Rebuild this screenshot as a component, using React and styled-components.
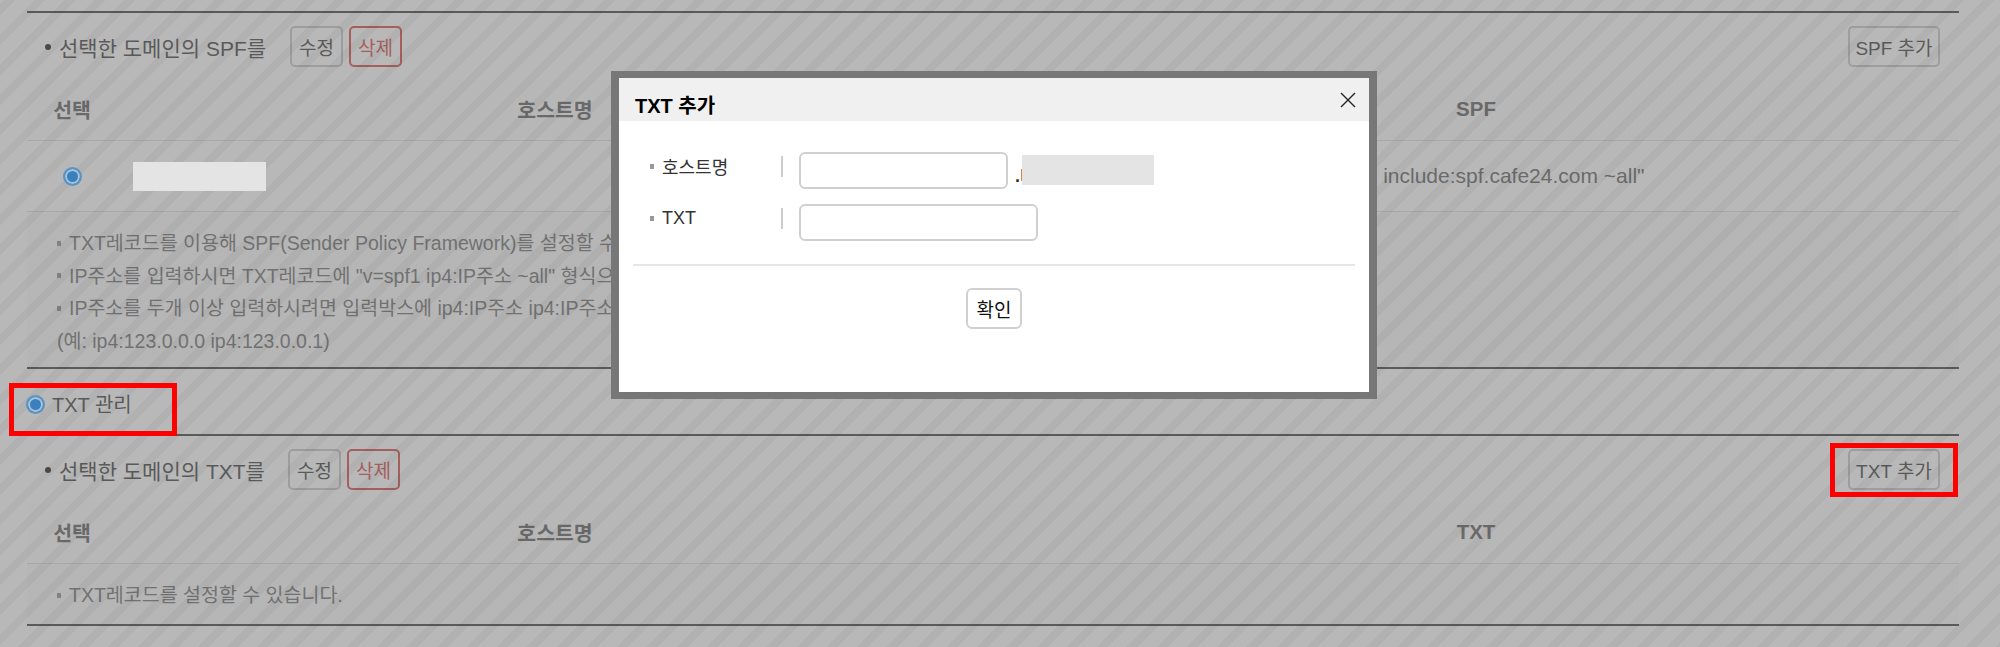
import React from "react";
import styled, { createGlobalStyle } from "styled-components";

const FONT = `"Liberation Sans", "Noto Sans CJK KR", sans-serif`;

const GlobalStyle = createGlobalStyle`
	html, body {
		margin: 0;
		padding: 0;
		background: #fff;
	}
	* {
		box-sizing: border-box;
	}
`;

const SpfSection = () => (
	<Section>
		<Toolbar>
			<ToolbarLeft>
				<ToolbarTitle $w={245}>선택한 도메인의 SPF를</ToolbarTitle>
				<Buttons>
					<Button>수정</Button>
					<Button $danger>삭제</Button>
				</Buttons>
			</ToolbarLeft>
			<AddButton>SPF 추가</AddButton>
		</Toolbar>
		<HeadRow>
			<HeadCell>선택</HeadCell>
			<HeadCell>호스트명</HeadCell>
			<HeadCell>SPF</HeadCell>
		</HeadRow>
		<BodyRow>
			<Cell>
				<Radio />
			</Cell>
			<HostCell>
				<Redacted $w={133} $h={29} />
			</HostCell>
			<Cell>"v=spf1 include:spf.cafe24.com ~all"</Cell>
		</BodyRow>
		<Notes>
			<Note>TXT레코드를 이용해 SPF(Sender Policy Framework)를 설정할 수 있습니다.</Note>
			<Note>IP주소를 입력하시면 TXT레코드에 "v=spf1 ip4:IP주소 ~all" 형식으로 설정됩니다.</Note>
			<Note>IP주소를 두개 이상 입력하시려면 입력박스에 ip4:IP주소 ip4:IP주소 형식으로 입력합니다.</Note>
			<NoteExample>(예: ip4:123.0.0.0 ip4:123.0.0.1)</NoteExample>
		</Notes>
	</Section>
);

const TxtSection = () => (
	<Section>
		<Toolbar>
			<ToolbarLeft>
				<ToolbarTitle $w={243}>선택한 도메인의 TXT를</ToolbarTitle>
				<Buttons>
					<Button>수정</Button>
					<Button $danger>삭제</Button>
				</Buttons>
			</ToolbarLeft>
			<Marked>
				<AddButton>TXT 추가</AddButton>
				<RedFrame $inset="-6px -18px -7px -18px" />
			</Marked>
		</Toolbar>
		<HeadRow>
			<HeadCell>선택</HeadCell>
			<HeadCell>호스트명</HeadCell>
			<HeadCell>TXT</HeadCell>
		</HeadRow>
		<Notes $single>
			<Note>TXT레코드를 설정할 수 있습니다.</Note>
		</Notes>
	</Section>
);

const AddTxtModal = () => (
	<Modal>
		<ModalHeader>
			<ModalTitle>TXT 추가</ModalTitle>
			<CloseButton aria-label="닫기">
				<svg width="16" height="16" viewBox="0 0 16 16" fill="none" stroke="#222" strokeWidth="1.4">
					<path d="M1 1 L15 15 M15 1 L1 15" />
				</svg>
			</CloseButton>
		</ModalHeader>
		<Form>
			<FormRow>
				<FormLabel>호스트명</FormLabel>
				<Input $w={209} />
				<DomainDot>.</DomainDot>
				<OrangeBar />
				<Redacted $w={132} $h={30} />
			</FormRow>
			<FormRow>
				<FormLabel>TXT</FormLabel>
				<Input $w={239} />
			</FormRow>
		</Form>
		<Divider />
		<ModalFooter>
			<ConfirmButton>확인</ConfirmButton>
		</ModalFooter>
	</Modal>
);

const App = () => {
	return (
		<Page>
			<GlobalStyle />
			<SpfSection />
			<RadioTitle>
				<Radio />
				<RadioLabel>TXT 관리</RadioLabel>
				<RedFrame $inset="14px 0 -2px -18px" />
			</RadioTitle>
			<TxtSection />
			<Backdrop />
			<AddTxtModal />
		</Page>
	);
};

const Page = styled.div`
	position: relative;
	width: 2000px;
	height: 647px;
	overflow: hidden;
	padding: 11px 41px 0 27px;
	background: #fff;
	font-family: ${FONT};
	color: #333;
`;

const Backdrop = styled.div`
	position: absolute;
	inset: 0;
	z-index: 10;
	background: repeating-linear-gradient(
		135deg,
		rgba(124, 124, 124, 0.54) 0 3.2px,
		rgba(116, 116, 116, 0.56) 3.2px 11px,
		rgba(124, 124, 124, 0.54) 11px 21.2px
	);
`;

const Section = styled.section`
	border-top: 2px solid #333;
	border-bottom: 2px solid #333;
`;

const Toolbar = styled.div`
	display: flex;
	align-items: flex-start;
	justify-content: space-between;
	height: 67px;
	padding: 13px 19px 0 18px;
`;

const ToolbarLeft = styled.div`
	display: flex;
	align-items: center;
`;

const ToolbarTitle = styled.div`
	display: flex;
	align-items: center;
	width: ${(p) => p.$w}px;
	font-size: 21px;
	color: #333;

	&::before {
		content: "";
		flex: none;
		width: 6px;
		height: 6px;
		margin-right: 8px;
		border-radius: 50%;
		background: #111;
	}
`;

const Buttons = styled.div`
	display: flex;
	gap: 6px;
`;

const Button = styled.button`
	height: 41px;
	padding: 0 7px;
	border: 2px solid ${(p) => (p.$danger ? "#d83a3a" : "#c4c4c4")};
	border-radius: 5px;
	background: #fff;
	color: ${(p) => (p.$danger ? "#d83a3a" : "#333")};
	font-family: ${FONT};
	font-size: 19px;
`;

const AddButton = styled(Button)`
	width: 92px;
	padding: 0;
	white-space: nowrap;
`;

const Marked = styled.div`
	position: relative;
	display: flex;
`;

const RedFrame = styled.span`
	position: absolute;
	inset: ${(p) => p.$inset};
	z-index: 20;
	border: 5px solid #f00;
	pointer-events: none;
`;

const HeadRow = styled.div`
	display: grid;
	grid-template-columns: 90px 876px 1fr;
	height: 61px;
	padding-bottom: 2px;
	border-bottom: 1px solid #ddd;
	align-items: center;
	text-align: center;
	background: #fdfdfd;
`;

const HeadCell = styled.div`
	font-size: 20.5px;
	font-weight: 700;
	color: #555;
`;

const BodyRow = styled.div`
	display: grid;
	grid-template-columns: 90px 876px 1fr;
	height: 71px;
	align-items: center;
	border-bottom: 1px solid #ddd;
	font-size: 21px;
	color: #555;
`;

const Cell = styled.div`
	display: flex;
	justify-content: center;
	align-items: center;
	white-space: nowrap;
`;

const HostCell = styled.div`
	display: flex;
	align-items: center;
	padding-left: 16px;
`;

const Radio = styled.span`
	position: relative;
	z-index: 20;
	flex: none;
	display: block;
	width: 19px;
	height: 19px;
	border: 2px solid #5b94c2;
	border-radius: 50%;
	background: #3b80bc;
	box-shadow: inset 0 0 0 2px #a9c4da;
`;

const Redacted = styled.span`
	position: relative;
	z-index: 20;
	flex: none;
	display: block;
	width: ${(p) => p.$w}px;
	height: ${(p) => p.$h}px;
	background: #e4e4e4;
`;

const Notes = styled.div`
	padding: ${(p) => (p.$single ? "15px 0 12.5px 30px" : "15px 0 10px 30px")};
	background: #fafafa;
	font-size: 19.5px;
	line-height: 32.5px;
	color: #666;
`;

const Note = styled.div`
	display: flex;
	align-items: center;

	&::before {
		content: "";
		flex: none;
		width: 4px;
		height: 5px;
		margin-right: 8px;
		background: #888;
	}
`;

const NoteExample = styled.div`
	color: #666;
`;

const RadioTitle = styled.div`
	position: relative;
	display: flex;
	align-items: center;
	gap: 7px;
	width: 150px;
	height: 65px;
	padding-top: 6px;
	font-size: 20px;
	color: #333;

	& > ${Radio} {
		margin-left: -1px;
	}
`;

const RadioLabel = styled.span`
	margin-bottom: 3px;
`;

const Modal = styled.div`
	position: absolute;
	top: 71px;
	left: 611px;
	z-index: 30;
	width: 766px;
	height: 328px;
	border: solid #777;
	border-width: 7px 8px;
	background: #fff;
	color: #000;
`;

const ModalHeader = styled.div`
	position: relative;
	height: 43px;
	padding: 17px 0 0 16px;
	background: #f0f0f0;
`;

const ModalTitle = styled.h3`
	margin: 0;
	font-size: 20px;
	line-height: 22px;
	font-weight: 700;
`;

const CloseButton = styled.button`
	position: absolute;
	top: 13px;
	right: 12px;
	display: flex;
	width: 18px;
	height: 18px;
	padding: 1px;
	border: 0;
	background: none;
`;

const Form = styled.div`
	display: flex;
	flex-direction: column;
	gap: 16px;
	padding: 31px 0 0 31px;
`;

const FormRow = styled.div`
	display: flex;
	align-items: center;
	height: 36px;
`;

const FormLabel = styled.div`
	display: flex;
	align-items: center;
	width: 133px;
	height: 21px;
	margin-right: 16px;
	margin-bottom: 8px;
	border-right: 2px solid #ccc;
	font-size: 18px;
	color: #333;

	&::before {
		content: "";
		flex: none;
		width: 4px;
		height: 5px;
		margin-right: 8px;
		background: #999;
	}
`;

const Input = styled.input.attrs({ type: "text" })`
	width: ${(p) => p.$w}px;
	height: 37px;
	border: 2px solid #d0d0d0;
	border-radius: 6px;
	background: #fff;
`;

const DomainDot = styled.span`
	margin-left: 7px;
	align-self: flex-end;
	font-size: 18px;
	line-height: 24px;
	font-weight: 700;
	color: #333;
`;

const OrangeBar = styled.span`
	width: 1px;
	height: 12px;
	margin: 10px 0 0 1px;
	background: #d9843c;
`;

const Divider = styled.hr`
	height: 2px;
	margin: 24px 14px 0;
	border: 0;
	background: #e6e6e6;
`;

const ModalFooter = styled.div`
	display: flex;
	justify-content: center;
	padding-top: 22px;
`;

const ConfirmButton = styled.button`
	width: 56px;
	height: 41px;
	padding: 0;
	border: 2px solid #d0d0d0;
	border-radius: 6px;
	background: #fff;
	color: #111;
	font-family: ${FONT};
	font-size: 19px;
`;

export default App;
